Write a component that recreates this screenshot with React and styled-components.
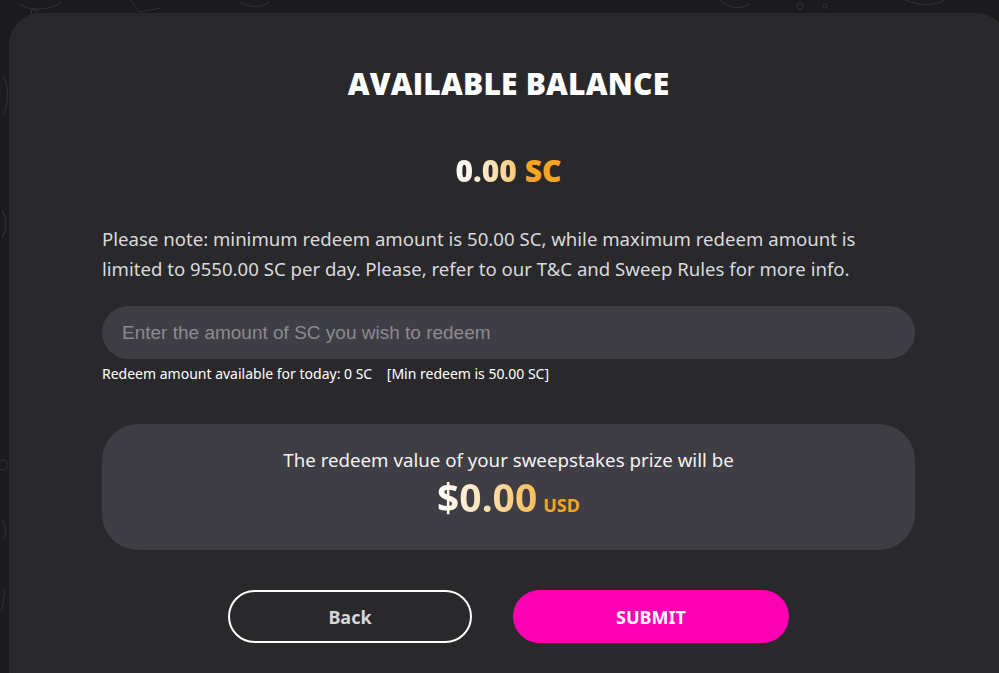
import React from "react";
import styled, { createGlobalStyle } from "styled-components";

const Global = createGlobalStyle`
  html, body { margin: 0; padding: 0; }
  body {
    background: #1b1b1d;
    overflow: hidden;
    font-family: "Noto Sans", "Open Sans", sans-serif;
  }
`;

const Page = styled.div`
  position: relative;
  width: 999px;
  height: 673px;
  overflow: hidden;
  padding: 13px 0 0 9px;
  box-sizing: border-box;
`;

const Doodles = styled.svg`
  position: absolute;
  left: 0;
  top: 0;
  width: 999px;
  height: 673px;
  pointer-events: none;
`;

const Card = styled.div`
  position: relative;
  width: 999px;
  min-height: 700px;
  box-sizing: border-box;
  background: #29292c;
  border-radius: 32px;
  padding: 51px 93px 0;
  display: flex;
  flex-direction: column;
  align-items: stretch;
`;

const Title = styled.h1`
  margin: 0;
  text-align: center;
  color: #ffffff;
  font-family: "Open Sans", sans-serif;
  font-weight: 800;
  font-size: 30px;
  line-height: 40px;
  letter-spacing: 0.2px;
`;

const Balance = styled.div`
  margin-top: 47px;
  text-align: center;
  font-family: "Open Sans", sans-serif;
  font-weight: 800;
  font-size: 30px;
  line-height: 40px;
`;

const Gradient = styled.span`
  background: linear-gradient(90deg, #ffffff 0%, #fbe4bd 55%, #f8c878 100%);
  -webkit-background-clip: text;
  background-clip: text;
  color: transparent;
`;

const Orange = styled.span`
  color: ${(p) => p.$color || "#f6a623"};
  font-size: ${(p) => p.$size || "inherit"};
`;

const Note = styled.p`
  margin: 33px 0 0;
  color: #d9d9dc;
  font-size: 18.6px;
  line-height: 30px;
`;

const Input = styled.input`
  margin-top: 22px;
  height: 53px;
  border: none;
  outline: none;
  border-radius: 27px;
  background: #3f3e44;
  padding: 0 20px;
  color: #fff;
  font-family: "Liberation Sans", Arial, sans-serif;
  font-size: 19px;
  &::placeholder { color: #8b8a90; }
`;

const Helper = styled.div`
  margin-top: 6px;
  color: #ffffff;
  font-size: 14px;
  line-height: 18px;
  white-space: pre;
`;

const PrizeBox = styled.div`
  margin-top: 41px;
  height: 126px;
  border-radius: 36px;
  background: #3f3e44;
  display: flex;
  flex-direction: column;
  align-items: center;
  justify-content: center;
  padding-bottom: 6px;
  box-sizing: border-box;
`;

const PrizeLabel = styled.div`
  color: #f2f2f4;
  font-size: 18.7px;
  line-height: 24px;
`;

const PrizeValue = styled.div`
  display: flex;
  align-items: baseline;
  gap: 6px;
  margin-top: 2px;
  font-weight: 700;
`;

const Dollar = styled(Gradient)`
  font-size: 39px;
  line-height: 46px;
  background: linear-gradient(90deg, #ffffff 0%, #fde0b0 50%, #f8bd58 100%);
  -webkit-background-clip: text;
  background-clip: text;
`;

const Buttons = styled.div`
  margin-top: 40px;
  display: flex;
  justify-content: center;
  gap: 41px;
`;

const Button = styled.button`
  width: ${(p) => p.$w}px;
  height: 53px;
  border-radius: 27px;
  box-sizing: border-box;
  font-family: "Noto Sans", sans-serif;
  font-weight: 700;
  font-size: 18px;
  cursor: pointer;
  border: ${(p) => (p.$primary ? "none" : "2px solid #ffffff")};
  background: ${(p) => (p.$primary ? "#ff00b4" : "transparent")};
  color: ${(p) => (p.$primary ? "#ffffff" : "#d6d6d9")};
`;

export default function App() {
  return (
    <>
      <Global />
      <Page>
        <Doodles viewBox="0 0 999 673" fill="none" stroke="#333337" strokeWidth="1">
          <path d="M20 4 C30 12 50 10 62 2" />
          <circle cx="34" cy="12" r="3" />
          <path d="M130 0 l10 12 l20 -4" />
          <path d="M240 2 c10 6 20 6 30 0" />
          <path d="M3 75 c6 10 6 30 0 40" />
          <path d="M2 210 c5 8 5 20 0 28" />
          <circle cx="3" cy="465" r="5" />
          <path d="M2 520 c5 6 5 14 0 20" />
          <path d="M5 590 l-3 20" />
          <path d="M720 0 c8 8 20 10 30 4" />
          <circle cx="800" cy="6" r="3" />
          <circle cx="825" cy="6" r="2" />
          <path d="M905 0 c15 6 30 6 40 0" />
        </Doodles>
        <Card>
          <Title>AVAILABLE BALANCE</Title>
          <Balance>
            <Gradient>0.00</Gradient> <Orange>SC</Orange>
          </Balance>
          <Note>
            Please note: minimum redeem amount is 50.00 SC, while maximum redeem amount is
            limited to 9550.00 SC per day. Please, refer to our T&amp;C and Sweep Rules for more info.
          </Note>
          <Input placeholder="Enter the amount of SC you wish to redeem" />
          <Helper>{"Redeem amount available for today: 0 SC    [Min redeem is 50.00 SC]"}</Helper>
          <PrizeBox>
            <PrizeLabel>The redeem value of your sweepstakes prize will be</PrizeLabel>
            <PrizeValue>
              <Dollar>$0.00</Dollar>
              <Orange $size="18px" $color="#f5a623">USD</Orange>
            </PrizeValue>
          </PrizeBox>
          <Buttons>
            <Button $w={244}>Back</Button>
            <Button $w={276} $primary>SUBMIT</Button>
          </Buttons>
        </Card>
      </Page>
    </>
  );
}
